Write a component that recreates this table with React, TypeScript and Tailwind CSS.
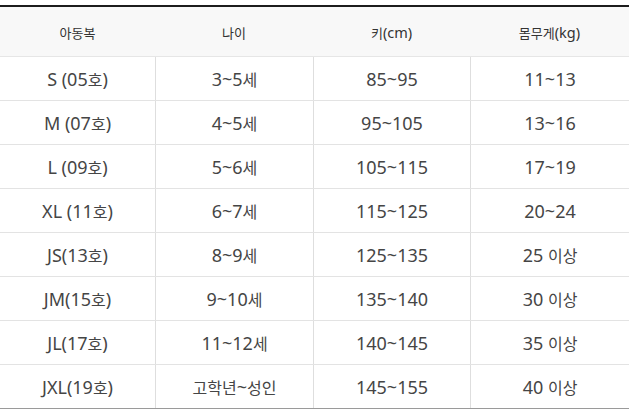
const headers = ["아동복", "나이", "키(cm)", "몸무게(kg)"];

const rows = [
  ["S (05호)", "3~5세", "85~95", "11~13"],
  ["M (07호)", "4~5세", "95~105", "13~16"],
  ["L (09호)", "5~6세", "105~115", "17~19"],
  ["XL (11호)", "6~7세", "115~125", "20~24"],
  ["JS(13호)", "8~9세", "125~135", "25 이상"],
  ["JM(15호)", "9~10세", "135~140", "30 이상"],
  ["JL(17호)", "11~12세", "140~145", "35 이상"],
  ["JXL(19호)", "고학년~성인", "145~155", "40 이상"],
];

const cols = "grid grid-cols-[155px_158px_157px_159px]";

// latin/digits in the source render larger than the hangul next to them
function Mixed({
  text,
  ko,
  latin,
}: {
  text: string;
  ko: string;
  latin: string;
}) {
  return (
    <span className="leading-none">
      {text.split(/([가-힣]+)/).map((part, i) =>
        part === "" ? null : (
          <span key={i} className={/[가-힣]/.test(part) ? ko : latin}>
            {part}
          </span>
        )
      )}
    </span>
  );
}

export default function App() {
  return (
    <div
      className="min-h-[418px] w-[636px] bg-white pt-[5px] text-[#454545]"
      style={{ fontFamily: '"Noto Sans", "Noto Sans CJK KR", sans-serif' }}
    >
      <div className="w-[629px] border-t-2 border-[#1c1c1c]">
        <div className={`${cols} h-[50px] border-b border-[#e6e6e6] bg-[#f8f8f8]`}>
          {headers.map((h) => (
            <div
              key={h}
              className="flex items-center justify-center text-[#333]"
            >
              <Mixed text={h} ko="text-[13px]" latin="text-[14.5px]" />
            </div>
          ))}
        </div>

        {rows.map((row, i) => (
          <div
            key={row[0]}
            className={`${cols} h-[44px] border-b ${
              i === rows.length - 1 ? "border-[#9a9a9a]" : "border-[#e3e3e3]"
            }`}
          >
            {row.map((cell, j) => (
              <div
                key={j}
                className={`flex items-center justify-center ${
                  j > 0 ? "border-l border-[#dedede]" : ""
                }`}
              >
                <Mixed text={cell} ko="text-[16px]" latin="text-[18px]" />
              </div>
            ))}
          </div>
        ))}
      </div>
    </div>
  );
}
